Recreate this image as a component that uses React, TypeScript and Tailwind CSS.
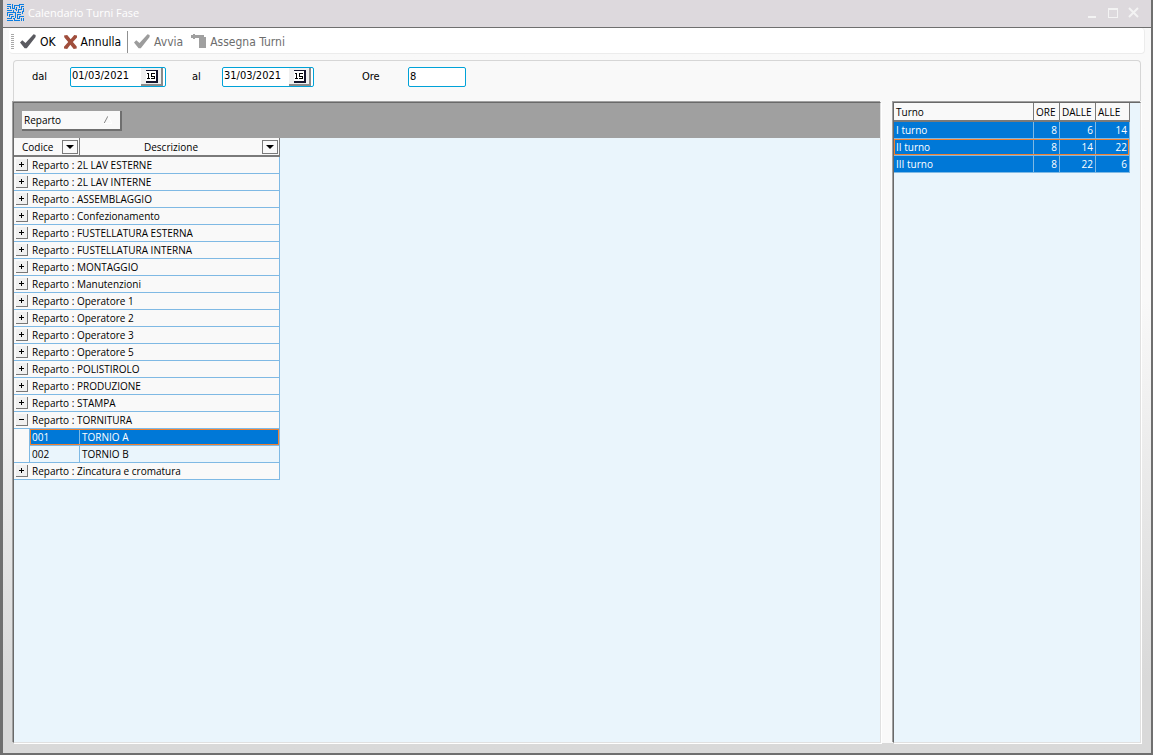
import { useState } from "react";

const departments = [
  "2L LAV ESTERNE",
  "2L LAV INTERNE",
  "ASSEMBLAGGIO",
  "Confezionamento",
  "FUSTELLATURA ESTERNA",
  "FUSTELLATURA INTERNA",
  "MONTAGGIO",
  "Manutenzioni",
  "Operatore 1",
  "Operatore 2",
  "Operatore 3",
  "Operatore 5",
  "POLISTIROLO",
  "PRODUZIONE",
  "STAMPA",
  "TORNITURA",
  "Zincatura e cromatura",
];

const machines: Record<string, { code: string; name: string }[]> = {
  TORNITURA: [
    { code: "001", name: "TORNIO A" },
    { code: "002", name: "TORNIO B" },
  ],
};

const shifts = [
  { name: "I turno", hours: 8, from: 6, to: 14 },
  { name: "II turno", hours: 8, from: 14, to: 22 },
  { name: "III turno", hours: 8, from: 22, to: 6 },
];

function AppLogo() {
  return (
    <svg width="17" height="17" viewBox="0 0 17 17" fill="none" stroke="#0b7de0" shapeRendering="crispEdges" aria-hidden="true">
      <path d="M0 0.5h4M0 2.5h3v2M5.5 0v4M0 4.5h2M0 6.5h5M7.5 1v3M7 1.5h5M9.5 3v4M8 5.5h2M12.5 0v4M13 0.5h4M14.5 2v3M14 2.5h3M11.5 5v3M11 5.5h4M16.5 4v4M5 4.5h3M0 8.5h9M10 8.5h4M0.5 8v4M2.5 10v3M2 10.5h4M0 14.5h5M4.5 12v3M4 12.5h3M8.5 9v5M6.5 6v2M6 14.5h2M10.5 10v4M10 10.5h4M15.5 7v3M12.5 12v3M12 12.5h5M0 16.5h6M8 16.5h5M14.5 14v3M10 14.5h2M7.5 14v3M16.5 14v3" />
    </svg>
  );
}

function CheckIcon({ color }: { color: string }) {
  return (
    <svg width="16" height="15" viewBox="0 0 16 15" fill={color} aria-hidden="true">
      <path d="M0 8.5 2.3 6.3l3.2 2.6L13.6.2 15.6 1v2L6.8 14.3H4.6z" />
    </svg>
  );
}

function CrossIcon() {
  return (
    <svg width="13" height="14" viewBox="0 0 13 14" fill="#a04e3c" aria-hidden="true">
      <path d="M0 .5 3.2 0l3.5 4.2L10.3 0 13 .4v2L8.9 7l3.8 4.4v2l-3 .6-3.4-4.3L3.2 14 0 13.6v-1.8L4.2 7 .4 2.5z" />
    </svg>
  );
}

function AssignIcon() {
  return (
    <svg width="15" height="15" viewBox="0 0 15 15" fill="#a0a0a0" className="shrink-0" aria-hidden="true">
      <rect x="0" y="1" width="13" height="3" />
      <rect x="2" y="0" width="2" height="5" />
      <rect x="8" y="3" width="7" height="11" />
    </svg>
  );
}

function CalendarIcon() {
  return (
    <svg width="13" height="13" viewBox="0 0 13 13" shapeRendering="crispEdges" aria-hidden="true">
      <path d="M1 0h12v13H1v-2h10V2H1z" fill="#15152c" />
      <path d="M1 1h10v10H1z" fill="#fff" />
      <path d="M2 3.5h2M3.5 3v6M2 8.5h3M10 3.5H6.5v2.5H9M9.5 6v2.5H6" stroke="#000" fill="none" />
    </svg>
  );
}

function DropArrow({ label }: { label: string }) {
  return (
    <button aria-label={label} className="flex h-3.5 w-4 shrink-0 items-center justify-center border border-[#7a7a7a] bg-[#f9f9f9]">
      <svg width="8" height="4" viewBox="0 0 8 4" aria-hidden="true">
        <path d="M0 0h8L4 4z" />
      </svg>
    </button>
  );
}

function DateField({
  id,
  label,
  value,
  labelClass,
  boxClass,
}: {
  id: string;
  label: string;
  value: string;
  labelClass: string;
  boxClass: string;
}) {
  return (
    <div className="flex items-center">
      <label htmlFor={id} className={`leading-5 ${labelClass}`}>
        {label}
      </label>
      <div className={`flex h-5 rounded-xs border border-[#00a2d8] bg-white ${boxClass}`}>
        <input id={id} defaultValue={value} className="h-4 w-full min-w-0 bg-transparent pl-px outline-none" />
        <button
          type="button"
          aria-label={`Scegli data ${label}`}
          className="mr-0.5 flex h-4.5 w-5.5 shrink-0 items-center justify-center border-r-2 border-b-2 border-[#8a8a8a] bg-[#f0f0f0]"
        >
          <CalendarIcon />
        </button>
      </div>
    </div>
  );
}

const toolButton = "flex items-center gap-1 whitespace-nowrap";
const sunken =
  "border border-t-[#696969] border-l-[#696969] border-r-[#e0e0e0] border-b-[#e0e0e0] bg-[#eaf5fc] shadow-[-1px_-1px_#a0a0a0,1px_1px_#ffffff]";
const headCell = "border-r border-b-2 border-[#7a7a7a] bg-[#f9f9f9] p-0 font-normal";
const cell = "border-r border-b border-[#7fb9e4] p-0";
const focusFrame = "pointer-events-none absolute inset-y-0 left-0 z-10 border border-[#f08030]";

export default function App() {
  const [open, setOpen] = useState<string[]>(["TORNITURA"]);
  const toggle = (name: string) =>
    setOpen((list) => (list.includes(name) ? list.filter((n) => n !== name) : [...list, name]));

  return (
    <div className="flex min-h-screen flex-col border-r-2 border-b-2 border-l-3 border-[#6f6f6f] bg-linear-to-b from-[#f9f9f9] from-40% to-[#d9d9d9] to-90% font-['DejaVu_Sans_Condensed','Liberation_Sans',sans-serif] text-[11px] leading-4 text-black">
      <header className="flex h-7 shrink-0 items-center border-b border-[#6f6f6f] bg-[#ddd9dd] pr-3 pb-0.5 pl-1">
        <AppLogo />
        <h1 className="ml-1 flex-1 font-['Open_Sans','Noto_Sans',sans-serif] text-[11px] text-white">Calendario Turni Fase</h1>
        <div className="flex items-center gap-2.5 text-[#f3f3f3]">
          <button aria-label="Riduci a icona" className="flex h-2.5 w-3 items-end justify-center">
            <span className="h-0.5 w-2 bg-current" />
          </button>
          <button aria-label="Ingrandisci" className="h-2.5 w-2.5 border border-t-2 border-current" />
          <button aria-label="Chiudi">
            <svg width="11" height="11" viewBox="0 0 11 11" stroke="currentColor" strokeWidth="2" aria-hidden="true">
              <path d="m1 1 9 9M10 1l-9 9" />
            </svg>
          </button>
        </div>
      </header>

      <div role="toolbar" aria-label="Comandi" className="mr-1.5 ml-1.5 flex h-6.5 shrink-0 items-center rounded-sm border-r border-b border-[#ececec] bg-white pt-0.5 pl-0.5 text-[12px]">
        <span className="mr-1.5 h-4 w-0.75 shrink-0 bg-[repeating-linear-gradient(#a8a8a8_0_1px,transparent_1px_2px)]" />
        <button className={`${toolButton} mr-2`}>
          <CheckIcon color="#5a5a60" />
          OK
        </button>
        <button className={toolButton}>
          <CrossIcon />
          Annulla
        </button>
        <span className="mx-1.5 h-5.5 w-px bg-[#909090]" />
        <button className={`${toolButton} mr-2 text-[#6d6d6d]`}>
          <CheckIcon color="#9c9c9c" />
          Avvia
        </button>
        <button className={`${toolButton} text-[#6d6d6d]`}>
          <AssignIcon />
          Assegna Turni
        </button>
      </div>

      <main className="flex flex-1 flex-col px-2.5 pt-1.5 pb-2.5">
        <form className="flex h-10.25 shrink-0 items-start rounded-t-sm border border-b-0 border-[#d6d6d6] bg-[#f9f9f9] pt-1.5 pl-4.5">
          <DateField id="from" label="dal" value="01/03/2021" labelClass="w-9.5" boxClass="mr-6.5 w-24" />
          <DateField id="to" label="al" value="31/03/2021" labelClass="w-7.5" boxClass="mr-12 w-23" />
          <label htmlFor="hours" className="w-11.5 leading-5">
            Ore
          </label>
          <input id="hours" defaultValue="8" className="h-5 w-14.5 rounded-xs border border-[#00a2d8] bg-white pb-0.5 pl-px outline-none" />
        </form>

        <div className="flex flex-1 gap-3 bg-[#f9f9f9] pt-px font-['Open_Sans','Noto_Sans',sans-serif] text-[10px] leading-4">
          <section aria-label="Reparti" className={`flex-1 ${sunken}`}>
            <div className="flex h-8.75 bg-[#a0a0a0] pt-2 pl-2">
              <button className="flex h-5 w-25 items-center justify-between border-r-2 border-b-2 border-[#6f6f6f] bg-[#f9f9f9] pr-2 pl-0.5">
                Reparto
                <svg width="8" height="8" viewBox="0 0 8 8" fill="none" aria-hidden="true">
                  <path d="M4 0 0 7.5" stroke="#888" />
                  <path d="m4 0 4 7.5H0" stroke="#fff" />
                </svg>
              </button>
            </div>
            <table className="w-66.5 table-fixed border-separate border-spacing-0">
              <colgroup>
                <col className="w-4" />
                <col className="w-12.5" />
                <col className="w-50" />
              </colgroup>
              <thead>
                <tr className="h-4.75">
                  <th colSpan={2} className={headCell}>
                    <div className="flex items-center justify-between pr-px pl-2">
                      Codice
                      <DropArrow label="Filtra Codice" />
                    </div>
                  </th>
                  <th className={headCell}>
                    <div className="flex items-center pr-px">
                      <span className="flex-1">Descrizione</span>
                      <DropArrow label="Filtra Descrizione" />
                    </div>
                  </th>
                </tr>
              </thead>
              {departments.map((name) => {
                const expanded = open.includes(name);
                const rows = machines[name] ?? [];
                return (
                  <tbody key={name}>
                    <tr>
                      <td colSpan={3} className={`${cell} bg-[#f9f9f9]`}>
                        <div className="flex h-4 items-center gap-1 pl-0.5">
                          <button
                            aria-label={`Espandi ${name}`}
                            aria-expanded={expanded}
                            onClick={() => toggle(name)}
                            className="flex h-3 w-3 items-center justify-center border-r border-b border-[#777] bg-[#f0f0f0]"
                          >
                            <svg width="5" height="5" viewBox="0 0 5 5" stroke="#000" shapeRendering="crispEdges" aria-hidden="true">
                              <path d={expanded ? "M0 2.5h5" : "M0 2.5h5M2.5 0v5"} />
                            </svg>
                          </button>
                          Reparto : {name}
                        </div>
                      </td>
                    </tr>
                    {expanded &&
                      rows.map((m, i) => (
                        <tr key={m.code} className={i === 0 ? "bg-[#0078d7] text-white" : ""}>
                          {i === 0 && <td rowSpan={rows.length} className={`${cell} bg-[#f9f9f9]`} />}
                          <td className={`${cell} relative h-4.25 pl-0.5`}>
                            {m.code}
                            {i === 0 && <span className={`${focusFrame} w-62.25`} />}
                          </td>
                          <td className={`${cell} pl-0.5`}>{m.name}</td>
                        </tr>
                      ))}
                  </tbody>
                );
              })}
            </table>
          </section>

          <section aria-label="Turni" className={`w-62 shrink-0 ${sunken}`}>
            <table className="w-59 table-fixed border-separate border-spacing-0">
              <colgroup>
                <col />
                <col className="w-6.5" />
                <col className="w-9" />
                <col className="w-8.5" />
              </colgroup>
              <thead>
                <tr className="h-4.75 text-left">
                  <th className={`${headCell} pl-0.5`}>Turno</th>
                  <th className={`${headCell} pl-0.5`}>ORE</th>
                  <th className={`${headCell} pl-0.5`}>DALLE</th>
                  <th className={`${headCell} pl-0.5`}>ALLE</th>
                </tr>
              </thead>
              <tbody>
                {shifts.map((s, i) => (
                  <tr key={s.name} className="bg-[#0078d7] text-white">
                    <td className={`${cell} relative h-4.25 pl-0.5`}>
                      {s.name}
                      {i === 1 && <span className={`${focusFrame} w-58.75`} />}
                    </td>
                    <td className={`${cell} pr-0.5 text-right`}>{s.hours}</td>
                    <td className={`${cell} pr-0.5 text-right`}>{s.from}</td>
                    <td className={`${cell} pr-0.5 text-right`}>{s.to}</td>
                  </tr>
                ))}
              </tbody>
            </table>
          </section>
        </div>
      </main>
    </div>
  );
}
